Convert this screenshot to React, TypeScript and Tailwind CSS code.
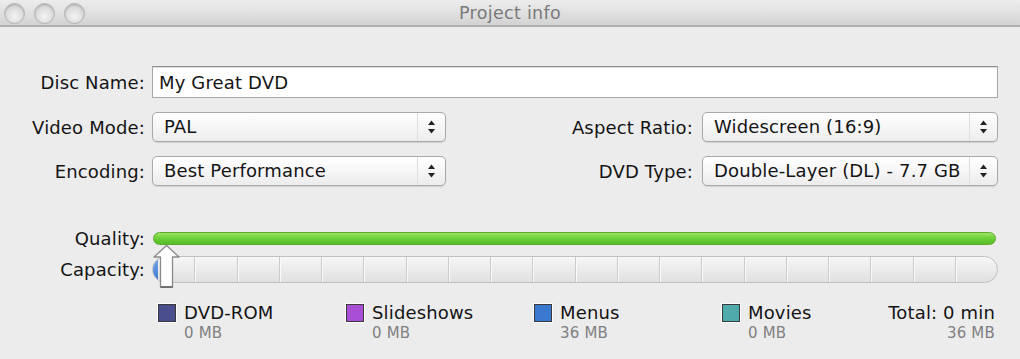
import React from "react";

const font = { fontFamily: '"DejaVu Sans", "Liberation Sans", sans-serif' };

const lbl = "text-[18px] tracking-[0.15px] text-[#141414] whitespace-nowrap";

function Light() {
  return (
    <div className="w-[21px] h-[21px] rounded-full border border-[#b3b3b3] bg-[radial-gradient(circle_at_50%_65%,#f4f4f4_0%,#dcdcdc_55%,#c8c8c8_100%)] shadow-[inset_0_1px_2px_rgba(0,0,0,0.18)]" />
  );
}

function Select({ value }: { value: string }) {
  return (
    <div className="flex h-full items-stretch rounded-[5px] border border-[#a9a9a9] bg-[linear-gradient(#ffffff,#f6f6f6_50%,#ececec)] shadow-[0_1px_1px_rgba(0,0,0,0.12)]">
      <div className={`flex-1 flex items-center pl-[11px] pb-[1px] overflow-hidden ${lbl}`}>{value}</div>
      <div className="w-[28px] border-l border-[#dedede] flex items-center justify-center">
        <svg width="9" height="16" viewBox="0 0 9 16">
          <path d="M4.5 1.5 L8 6 H1 Z" fill="#222" />
          <path d="M4.5 14.5 L8 10 H1 Z" fill="#222" />
        </svg>
      </div>
    </div>
  );
}

function Legend({ color, name, size, align = "left" }: { color?: string; name: string; size: string; align?: "left" | "right" }) {
  return (
    <div className={`flex ${align === "right" ? "justify-end" : ""}`}>
      {color && (
        <div className="w-[18px] h-[18px] mt-[2px] mr-[8px] border border-[#3a3a3a] shadow-[0_0_0_1px_rgba(255,255,255,0.9)]" style={{ background: color }} />
      )}
      <div className={`flex flex-col ${align === "right" ? "items-end" : ""}`}>
        <div className={`${lbl} leading-[21px]`}>{name}</div>
        <div className="text-[15px] tracking-[0.2px] leading-[18px] text-[#808080] mt-[1px]">{size}</div>
      </div>
    </div>
  );
}

export default function App() {
  const segs = Array.from({ length: 20 });
  return (
    <div className="relative w-[1020px] h-[359px] bg-[#ececec] overflow-hidden" style={font}>
      <div className="h-[27px] grid grid-cols-[1fr_auto_1fr] items-center bg-[linear-gradient(#ececec,#dedede_60%,#d2d2d2)] border-b-[2px] border-[#b0b0b0]">
        <div className="flex items-center gap-[9px] pl-[4px]">
          <Light />
          <Light />
          <Light />
        </div>
        <div className="text-[17.5px] text-[#7a7a7a] tracking-[0.3px]">Project info</div>
        <div />
      </div>

      <div className="pt-[39px] pr-[22px]">
        <div className="flex items-center h-[32px]">
          <div className={`w-[145px] text-right ${lbl}`}>Disc Name:</div>
          <div className={`ml-[7px] flex-1 h-full bg-white border border-[#a8a8a8] border-t-[#8e8e8e] shadow-[inset_0_1px_1px_rgba(0,0,0,0.15)] flex items-center pl-[6px] ${lbl}`}>
            My Great DVD
          </div>
        </div>

        <div className="mt-[14px] grid grid-cols-[145px_301px_1fr_296px] gap-y-[14px] items-center">
          <div className={`text-right ${lbl}`}>Video Mode:</div>
          <div className="ml-[7px] h-[30px]"><Select value="PAL" /></div>
          <div className={`text-right pr-[9px] ${lbl}`}>Aspect Ratio:</div>
          <div className="h-[30px]"><Select value="Widescreen (16:9)" /></div>

          <div className={`text-right ${lbl}`}>Encoding:</div>
          <div className="ml-[7px] h-[30px]"><Select value="Best Performance" /></div>
          <div className={`text-right pr-[9px] ${lbl}`}>DVD Type:</div>
          <div className="h-[30px]"><Select value="Double-Layer (DL) - 7.7 GB" /></div>
        </div>

        <div className="mt-[45px] flex items-center h-[14px]">
          <div className={`w-[145px] text-right ${lbl}`}>Quality:</div>
          <div className="ml-[8px] mr-[2px] flex-1 h-[13px] rounded-full border border-[#5da92f] bg-[linear-gradient(#9be467,#6fd03a_45%,#58bd26)]" />
        </div>

        <div className="mt-[11px] flex items-center h-[27px]">
          <div className={`w-[145px] text-right ${lbl}`}>Capacity:</div>
          <div className="ml-[7px] flex-1 h-full relative rounded-full border border-[#c0c0c0] bg-[linear-gradient(#f7f7f7,#ebebeb_50%,#e0e0e0)] overflow-hidden flex">
            <div className="absolute left-0 top-0 bottom-0 w-[5px] bg-[linear-gradient(#7aa8e8,#3a78d0)] rounded-l-full" />
            {segs.map((_, i) => (
              <div key={i} className={`flex-1 h-full ${i < 19 ? "border-r border-[#cbcbcb] shadow-[1px_0_0_#fafafa]" : ""}`} />
            ))}
          </div>
        </div>

        <div className="ml-[158px] mt-[19px] grid grid-cols-[188px_188px_188px_1fr]">
          <Legend color="#4a4e8c" name="DVD-ROM" size="0 MB" />
          <Legend color="#a94fd6" name="Slideshows" size="0 MB" />
          <Legend color="#3b78cf" name="Menus" size="36 MB" />
          <div className="flex justify-between">
            <Legend color="#4fabab" name="Movies" size="0 MB" />
            <div className="mr-[3px]"><Legend name="Total: 0 min" size="36 MB" align="right" /></div>
          </div>
        </div>
      </div>

      <svg className="absolute left-[153px] top-[244px]" width="28" height="45" viewBox="0 0 28 45">
        <path d="M13.5 1.5 L26 13 H19.5 V43 H7.5 V13 H1 Z" fill="#ffffff" stroke="#8a8a8a" strokeWidth="1.3" strokeLinejoin="round" />
        <path d="M7.5 43 H19.5" stroke="#6a6a6a" strokeWidth="1.8" />
      </svg>
    </div>
  );
}
